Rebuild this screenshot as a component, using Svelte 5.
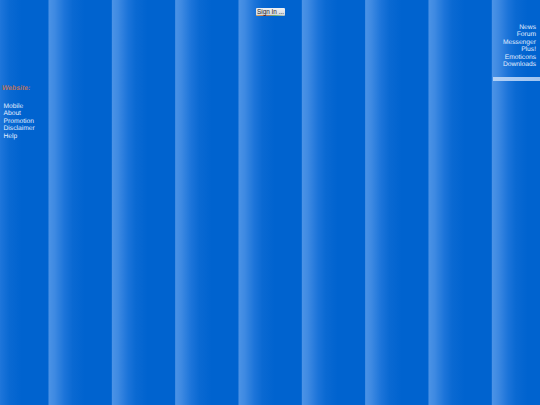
<script>
  const siteLinks = ['Mobile', 'About', 'Promotion', 'Disclaimer', 'Help'];
  const mainLinks = ['News', 'Forum', 'Messenger', 'Plus!', 'Emoticons', 'Downloads'];
</script>

<div class="page">
  <div class="left">
    <h4>Website:</h4>
    <ul>
      {#each siteLinks as link}
        <li>{link}</li>
      {/each}
    </ul>
  </div>

  <div class="center">
    <button class="sign-in">Sign In ...</button>
  </div>

  <div class="right">
    <ul>
      {#each mainLinks as link}
        <li>{link}</li>
      {/each}
    </ul>
    <div class="bar"></div>
  </div>
</div>

<style>
  :global(body) {
    margin: 0;
    background: #0063cf;
  }

  .page {
    display: flex;
    justify-content: space-between;
    height: 405px;
    overflow: hidden;
    font-family: "Liberation Sans", Arial, sans-serif;
    font-size: 6.7px;
    line-height: 7.5px;
    text-rendering: geometricPrecision;
    color: #e4efff;
    background-color: #0063cf;
    background-image: linear-gradient(
      90deg,
      #4c93e6 0px,
      #3f8ae2 6px,
      #1c74d9 16px,
      #0a69d2 24px,
      #0063cf 36px,
      #0063cf 63.33px
    );
    background-size: 63.33px 100%;
    background-position: 48.5px 0;
  }

  ul {
    list-style: none;
    margin: 0;
    padding: 0;
  }

  .left {
    width: 48px;
    padding-top: 85px;
  }

  h4 {
    margin: 0 0 10px 2px;
    font-size: 6.8px;
    font-weight: bold;
    font-style: italic;
    color: #b9745f;
  }

  .left ul {
    margin-left: 3.5px;
  }

  .center {
    flex: 1;
    display: flex;
    justify-content: center;
    align-items: flex-start;
    padding-top: 8px;
  }

  .sign-in {
    width: 29px;
    height: 8px;
    padding: 0 0 1px;
    border: 0;
    border-radius: 1px;
    background:
      linear-gradient(90deg, #d8b060, #c86a50 35%, #6ab070 65%, #b8c0c8) bottom / 100% 1px no-repeat,
      linear-gradient(#eef1f4, #cfd5de);
    color: #1a1f2a;
    font-family: inherit;
    font-size: 6.4px;
    line-height: 6px;
  }

  .right {
    width: 47px;
    padding-top: 23.5px;
    text-align: right;
  }

  .right ul {
    padding-right: 4px;
  }

  .bar {
    height: 4px;
    margin-top: 8.5px;
    background: linear-gradient(90deg, #b4d2f6, #a0c4f0);
  }
</style>
